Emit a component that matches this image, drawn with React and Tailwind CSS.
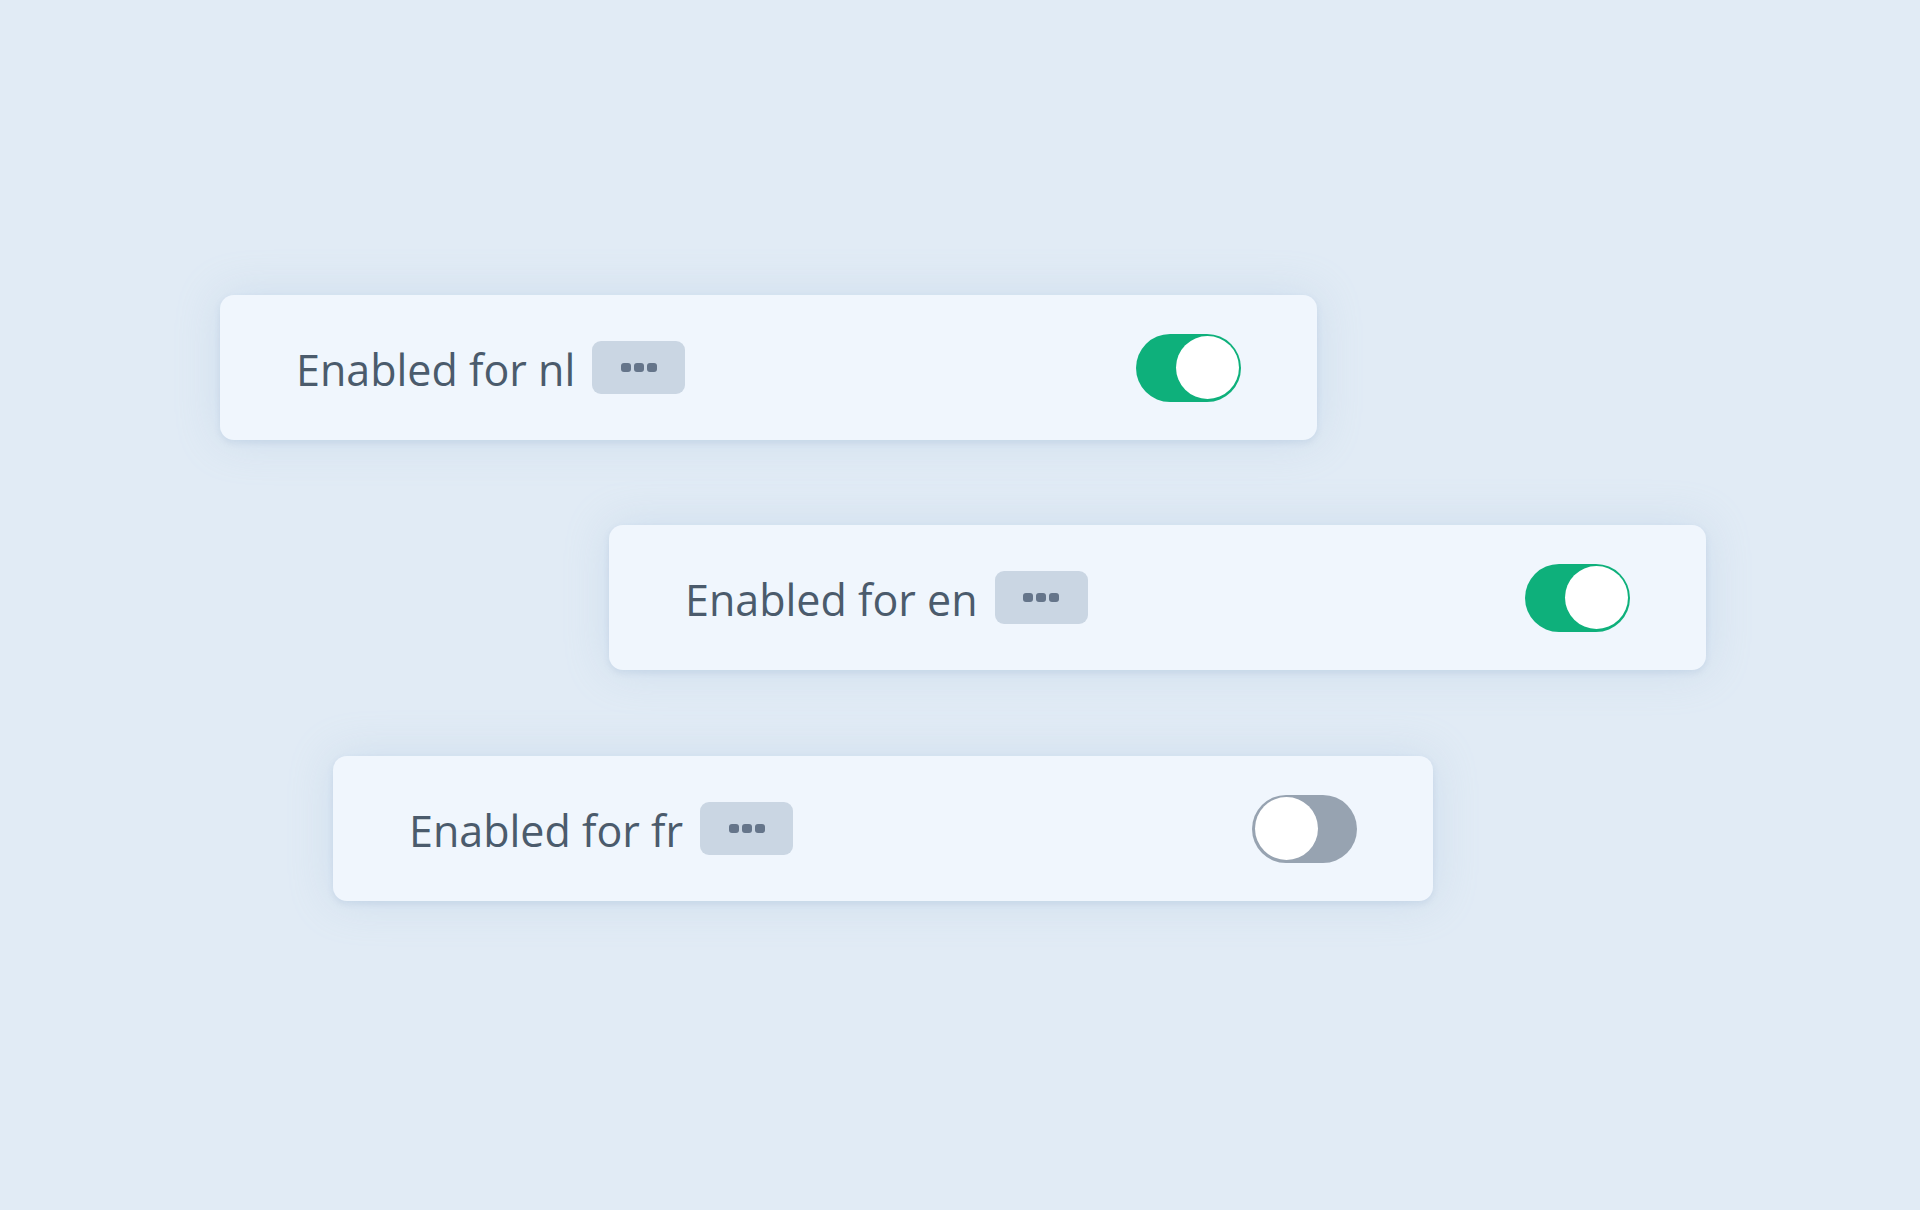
import React from 'react';

const ROWS = [
  { lang: 'nl', on: true, offset: 'ml-[220px] w-[1097px]' },
  { lang: 'en', on: true, offset: 'ml-[609px] w-[1097px]' },
  { lang: 'fr', on: false, offset: 'mt-[1px] ml-[333px] w-[1100px]' }
];

function Dots() {
  return (
    <span className="flex h-[53px] w-[93px] items-center justify-center gap-[3px] rounded-[9px] bg-[#cad6e3]">
      <span className="h-[9px] w-[10px] rounded-[3px] bg-[#65758a]" />
      <span className="h-[9px] w-[10px] rounded-[3px] bg-[#65758a]" />
      <span className="h-[9px] w-[10px] rounded-[3px] bg-[#65758a]" />
    </span>
  );
}

function Toggle({ on }) {
  return (
    <span
      className={`flex h-[68px] w-[105px] items-center rounded-full p-[2.5px] ${
        on ? 'justify-end bg-[#0eb07b]' : 'justify-start bg-[#97a3b1]'
      }`}
    >
      <span className="h-[63px] w-[63px] rounded-full bg-white" />
    </span>
  );
}

function Row({ lang, on, offset }) {
  return (
    <div
      className={`${offset} flex h-[145px] items-center justify-between rounded-[14px] bg-[#f0f6fd] px-[76px] shadow-[0_3px_6px_rgba(120,150,185,0.16),0_0_44px_rgba(160,190,220,0.3)]`}
    >
      <div className="flex items-center gap-[17px]">
        <span className="pt-[4px] text-[43px] font-medium leading-none text-[#4b5b6c]">
          Enabled for {lang}
        </span>
        <Dots />
      </div>
      <Toggle on={on} />
    </div>
  );
}

export default function App() {
  return (
    <div
      className="flex min-h-[1210px] w-full flex-col gap-[85px] bg-[#e1ebf5] pt-[295px]"
      style={{ fontFamily: '"Open Sans", "Noto Sans", sans-serif' }}
    >
      {ROWS.map((row) => (
        <Row key={row.lang} {...row} />
      ))}
    </div>
  );
}
